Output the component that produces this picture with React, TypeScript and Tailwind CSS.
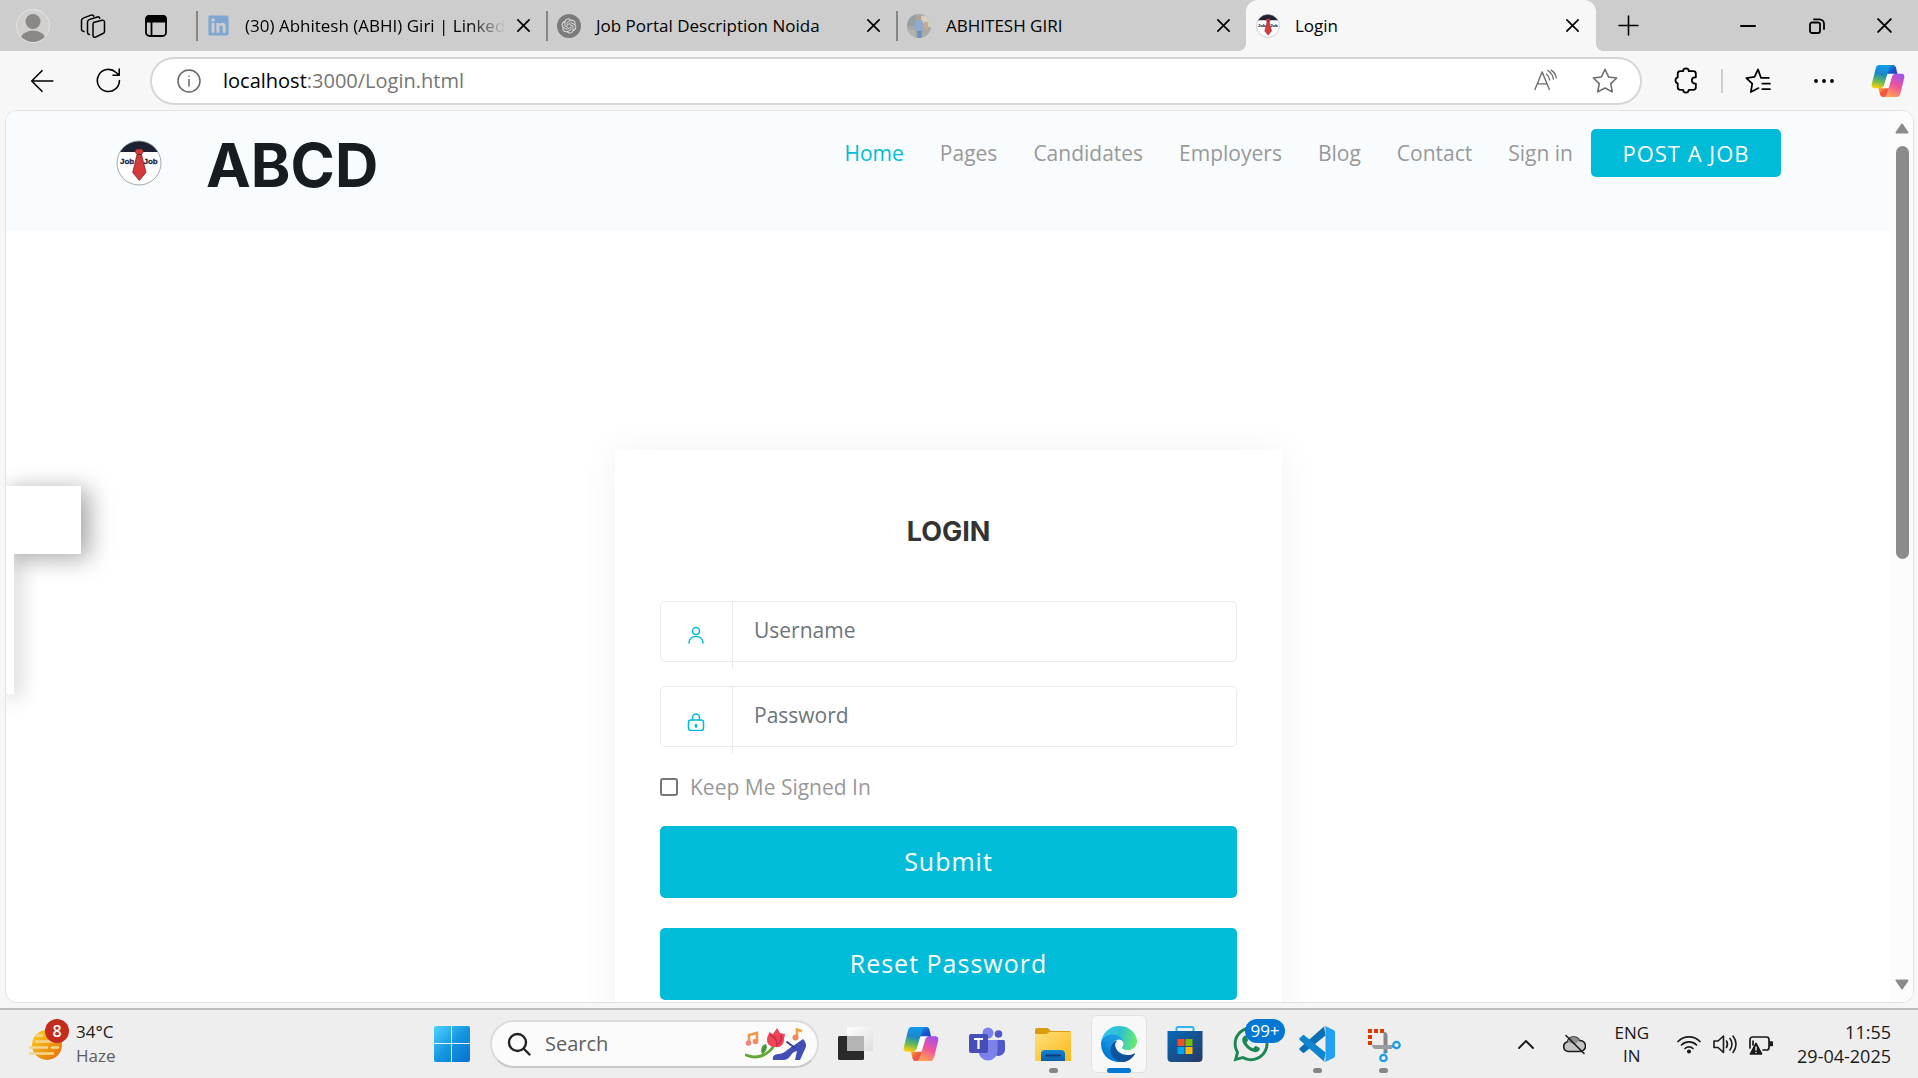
import type { ReactNode } from 'react';
import { FaLinkedin, FaWhatsapp } from 'react-icons/fa';
import { RiOpenaiFill } from 'react-icons/ri';

const UI_FONT = "font-['Open_Sans','Noto_Sans',sans-serif]";
const HEADING_FONT = "font-['Inter','Liberation_Sans',sans-serif]";

function JobLogo({ className }: { className: string }) {
  return (
    <svg viewBox="0 0 46 46" className={className} aria-hidden="true">
      <defs>
        <clipPath id="badge">
          <circle cx="23" cy="23" r="22" />
        </clipPath>
      </defs>
      <circle cx="23" cy="23" r="22" fill="#fff" />
      <rect width="46" height="12" fill="#1d2233" clipPath="url(#badge)" />
      <circle cx="23" cy="23" r="22" fill="none" stroke="#8d929c" strokeWidth="0.8" />
      <text x="4" y="24" fontSize="8" fontWeight="800" fill="#1d2540" stroke="#1d2540" strokeWidth="0.3" fontFamily="Liberation Sans, sans-serif">Job</text>
      <text x="27.500" y="24" fontSize="8" fontWeight="800" fill="#1d2540" stroke="#1d2540" strokeWidth="0.3" fontFamily="Liberation Sans, sans-serif">Job</text>
      <path d="M20.500 9h5.500l1.500 2.500-2 3h-4.500l-2-3z M21 14.500h4.500l4.500 18-6.700 8-6.600-8z" fill="#d63a3a" stroke="#5b1d28" strokeWidth="0.700" />
    </svg>
  );
}

function CopilotIcon({ className }: { className: string }) {
  return (
    <svg viewBox="0 0 36 36" className={className} aria-hidden="true">
      <defs>
        <linearGradient id="cpLeft" x1="0.600" y1="0" x2="0.400" y2="1">
          <stop offset="0" stopColor="#0d9df0" />
          <stop offset="0.400" stopColor="#1f86c9" />
          <stop offset="0.700" stopColor="#5fb95a" />
          <stop offset="1" stopColor="#f5cf10" />
        </linearGradient>
        <linearGradient id="cpTop" x1="0" y1="0" x2="1" y2="1">
          <stop offset="0" stopColor="#14a0ee" />
          <stop offset="0.600" stopColor="#1b53c8" />
          <stop offset="1" stopColor="#1842b8" />
        </linearGradient>
        <linearGradient id="cpRight" x1="0.700" y1="0" x2="0.300" y2="1">
          <stop offset="0" stopColor="#a552ec" />
          <stop offset="0.500" stopColor="#ee5599" />
          <stop offset="1" stopColor="#ffa552" />
        </linearGradient>
        <linearGradient id="cpBottom" x1="0" y1="0" x2="1" y2="1">
          <stop offset="0" stopColor="#ffb02e" />
          <stop offset="0.500" stopColor="#f0563a" />
          <stop offset="1" stopColor="#f2668c" />
        </linearGradient>
      </defs>
      <path d="M16 1h7.500c1.600 0 2.400 1 2.900 2.600L28.200 11H17z" fill="url(#cpTop)" />
      <path d="M20 35h-7.500c-1.600 0-2.400-1-2.900-2.600L7.800 25H19z" fill="url(#cpBottom)" />
      <path d="M8.500 1H22c-1.600.4-2.300 1.800-2.900 3.700l-5 17.300c-.7 2.500-2.300 3.700-4.800 3.700H4c-3 0-3.900-2.200-3-5.200L5 4.500C5.700 2.200 6.700 1 8.500 1z" fill="url(#cpLeft)" />
      <path d="M27.500 35H14c1.600-.4 2.300-1.800 2.900-3.700l5-17.300c.7-2.500 2.300-3.700 4.800-3.700H32c3 0 3.900 2.200 3 5.200l-4 16c-.7 2.300-1.700 3.500-3.500 3.500z" fill="url(#cpRight)" />
      <path d="M17.500 10.300H26c-2.200.3-3.500 1.500-4.100 3.700l-3.400 11.700H10c2.200-.3 3.500-1.500 4.100-3.700z" fill="#fafafa" />
    </svg>
  );
}

function EdgeIcon({ className }: { className: string }) {
  return (
    <svg viewBox="0 0 256 256" className={className} aria-hidden="true">
      <defs>
        <linearGradient id="edA" x1="63" y1="178" x2="241" y2="178" gradientUnits="userSpaceOnUse">
          <stop offset="0" stopColor="#0c59a4" />
          <stop offset="1" stopColor="#114a8b" />
        </linearGradient>
        <linearGradient id="edB" x1="140" y1="110" x2="45" y2="215" gradientUnits="userSpaceOnUse">
          <stop offset="0" stopColor="#1b9de2" />
          <stop offset="0.400" stopColor="#1595df" />
          <stop offset="1" stopColor="#0078d4" />
        </linearGradient>
        <linearGradient id="edC" x1="10" y1="70" x2="245" y2="120" gradientUnits="userSpaceOnUse">
          <stop offset="0" stopColor="#35c1f1" />
          <stop offset="0.500" stopColor="#2fc2cf" />
          <stop offset="1" stopColor="#66eb6e" />
        </linearGradient>
      </defs>
      <path fill="url(#edA)" d="M235.700 195.500a93.700 93.700 0 0 1-10.600 4.700 101.900 101.900 0 0 1-35.900 6.400c-47.300 0-88.500-32.500-88.500-74.300a31.500 31.500 0 0 1 16.400-27.300c-42.800 1.800-53.800 46.400-53.800 72.500 0 74 68.100 81.400 82.800 81.400 7.900 0 19.800-2.300 27-4.600l1.300-.4a128.300 128.300 0 0 0 66.600-52.800 4 4 0 0 0-5.300-5.600z" />
      <path fill="url(#edB)" d="M105.700 241.400a79.200 79.200 0 0 1-22.700-21.300 80.700 80.700 0 0 1 29.500-120c3.200-1.500 8.500-4.100 15.600-4a32.400 32.400 0 0 1 25.700 13 31.900 31.900 0 0 1 6.300 18.700c0-.2 24.500-79.600-80-79.600-43.900 0-80 41.700-80 78.200a130.200 130.200 0 0 0 12.100 56 128 128 0 0 0 156.400 67 75.500 75.500 0 0 1-62.800-8z" />
      <path fill="url(#edC)" d="M152.300 148.900c-.9 1-3.400 2.500-3.400 5.600 0 2.600 1.700 5.200 4.800 7.300 14.300 10 41.400 8.600 41.500 8.600a59.600 59.600 0 0 0 30.300-8.300 61.400 61.400 0 0 0 30.400-52.900c.3-22.400-8-37.300-11.300-43.900C223.500 23.900 177.700 0 128 0A128 128 0 0 0 0 126.200c.5-36.500 36.800-66 80-66 3.500 0 23.500.3 42 10a72.600 72.600 0 0 1 30.900 29.300c6.100 10.600 7.200 24.100 7.200 29.500s-2.700 13.300-7.800 19.900z" />
    </svg>
  );
}

function Stroke({ className, children, width = 1.5, box = 24 }: { className: string; children: ReactNode; width?: number; box?: number }) {
  return (
    <svg
      viewBox={`0 0 ${box} ${box}`}
      className={className}
      fill="none"
      stroke="currentColor"
      strokeWidth={width}
      strokeLinecap="round"
      strokeLinejoin="round"
      aria-hidden="true"
    >
      {children}
    </svg>
  );
}

function CloseGlyph({ className }: { className: string }) {
  return (
    <Stroke className={className} width={1.8} box={16}>
      <path d="M2 2l12 12M14 2L2 14" />
    </Stroke>
  );
}

function InactiveTab({ title, icon, faded = false }: { title: string; icon: ReactNode; faded?: boolean }) {
  return (
    <div className="flex min-w-0 max-w-[350px] flex-1 items-center">
      <span className="h-[30px] w-0.5 shrink-0 bg-[#868686]" />
      <button type="button" role="tab" aria-selected="false" className="ml-[9px] flex min-w-0 flex-1 items-center gap-[15px] text-left">
        {icon}
        <span className={`whitespace-nowrap ${faded ? '[mask-image:linear-gradient(to_right,black_calc(100%-36px),transparent)]' : ''}`}>{title}</span>
      </button>
      <button type="button" aria-label={`Close ${title}`} className="flex w-[45px] shrink-0 justify-center">
        <CloseGlyph className="size-[15px]" />
      </button>
    </div>
  );
}

function TabStrip() {
  return (
    <div className="flex h-[51px] shrink-0 items-stretch bg-[#cdcdcd] text-[17px] text-black">
      <div className="flex w-[196px] shrink-0 items-center">
        <button type="button" aria-label="Profile" className="ml-4">
          <svg viewBox="0 0 34 34" className="size-[34px]" aria-hidden="true">
            <defs>
              <clipPath id="avatar"><circle cx="17" cy="17" r="16" /></clipPath>
            </defs>
            <circle cx="17" cy="17" r="16.500" fill="#d2d0ce" stroke="#e6e4e2" />
            <g clipPath="url(#avatar)" fill="#8a8886">
              <circle cx="17" cy="12.500" r="7.500" />
              <ellipse cx="17" cy="31" rx="12.500" ry="9.500" />
            </g>
          </svg>
        </button>
        <button type="button" aria-label="Workspaces" className="ml-[30px]">
          <Stroke className="size-[26px]" width={1.5} box={26}>
            <path d="M13.500 9.500l8.500-2.300c1.200-.3 2.500.5 2.500 1.800v9.500c0 1-.6 1.700-1.500 2l-7.500 3.600c-1.200.5-2.500-.2-2.500-1.500V11.500c0-1 .2-1.700.5-2z" />
            <path d="M9.500 21.500c-1.500-.2-2-1-2-2V9c0-1.200.6-2 1.700-2.400l8-2.600c1.200-.3 2.300.3 2.600 1.300" />
            <path d="M4 18.500c-1.500-.3-2.500-1-2.500-2.300V7.500c0-1.200.6-2 1.700-2.400l7.800-3c1.200-.4 2.400 0 2.800 1" />
          </Stroke>
        </button>
        <button type="button" aria-label="Tab actions" className="ml-[38px]">
          <Stroke className="size-6" width={1.8}>
            <rect x="2" y="2" width="20" height="20" rx="3.500" />
            <path d="M2 7.500V5a3 3 0 0 1 3-3h14a3 3 0 0 1 3 3v2.500z" fill="currentColor" />
            <path d="M7.500 7v15" />
          </Stroke>
        </button>
      </div>
      <div role="tablist" aria-label="Open tabs" className="flex min-w-0 max-w-[1400px] flex-1">
        <InactiveTab faded title="(30) Abhitesh (ABHI) Giri | Linked" icon={<FaLinkedin className="size-[23px] shrink-0 text-[#7da7d2]" />} />
        <InactiveTab
          title="Job Portal Description Noida"
          icon={
            <span className="flex size-6 shrink-0 items-center justify-center rounded-full bg-[#7b7b7b] text-[#dedede]">
              <RiOpenaiFill className="size-[18px]" />
            </span>
          }
        />
        <InactiveTab
          title="ABHITESH GIRI"
          icon={
            <svg viewBox="0 0 24 24" className="size-6 shrink-0" aria-hidden="true">
              <defs><clipPath id="photo"><circle cx="12" cy="12" r="12" /></clipPath></defs>
              <g clipPath="url(#photo)">
                <rect width="24" height="24" fill="#a9a9a6" />
                <path d="M0 0h9v12H0z" fill="#95a0a6" />
                <path d="M14 2h10v11H14z" fill="#d6cfc0" />
                <path d="M17 8h4v8h-4z" fill="#c9a98c" />
                <path d="M9 6h6l2 5-1 6H9l-2-5z" fill="#8fa9cf" />
                <circle cx="12" cy="4.500" r="2.200" fill="#b99c8c" />
                <path d="M10 17h5l-.500 7h-4z" fill="#6f8fc0" />
                <path d="M0 16h8v8H0z" fill="#b5b5b0" />
              </g>
            </svg>
          }
        />
        <div className="relative flex min-w-0 max-w-[351px] flex-1 items-center rounded-t-xl bg-[#f7f7f7] before:absolute before:bottom-0 before:-left-2 before:size-2 before:bg-[radial-gradient(circle_at_0_0,transparent_8px,#f7f7f7_8px)] after:absolute after:-right-2 after:bottom-0 after:size-2 after:bg-[radial-gradient(circle_at_100%_0,transparent_8px,#f7f7f7_8px)]">
          <button type="button" role="tab" aria-selected="true" className="ml-2.5 flex flex-1 items-center gap-[15px] text-left">
            <JobLogo className="size-6" />
            <span>Login</span>
          </button>
          <button type="button" aria-label="Close Login" className="flex w-12 justify-center">
            <CloseGlyph className="size-[15px]" />
          </button>
        </div>
      </div>
      <button type="button" aria-label="New tab" className="ml-5 flex w-6 items-center justify-center">
        <Stroke className="size-[21px]" width={1.5} box={20}><path d="M10 1v18M1 10h18" /></Stroke>
      </button>
      <div className="ml-auto flex">
        <button type="button" aria-label="Minimize" className="flex w-[69px] items-center justify-center">
          <Stroke className="size-4" width={2} box={16}><path d="M1 8h14" /></Stroke>
        </button>
        <button type="button" aria-label="Restore" className="flex w-[69px] items-center justify-center">
          <Stroke className="size-4" width={1.8} box={16}>
            <rect x="1" y="4.500" width="10" height="10.500" rx="2" />
            <path d="M5 1.300h5.500a4.500 4.500 0 0 1 4.500 4.500V11" />
          </Stroke>
        </button>
        <button type="button" aria-label="Close window" className="flex w-[67px] items-center justify-center">
          <CloseGlyph className="size-[17px]" />
        </button>
      </div>
    </div>
  );
}

function ToolButton({ label, className, children }: { label: string; className: string; children: ReactNode }) {
  return (
    <button type="button" aria-label={label} className={`flex shrink-0 items-center justify-center text-black ${className}`}>
      {children}
    </button>
  );
}

function Toolbar() {
  return (
    <div className="flex h-[59px] shrink-0 items-center pl-[9px]">
      <ToolButton label="Back" className="w-[66px]">
        <Stroke className="size-[26px]" width={1.5}><path d="M22 12H2.500M12 2.500L2.500 12 12 21.500" /></Stroke>
      </ToolButton>
      <ToolButton label="Refresh" className="w-[66px]">
        <Stroke className="size-[25px]" width={1.5}>
          <path d="M22.500 12A10.600 10.600 0 1 1 19 4.100l3 2.600M22.300 1v6h-6" />
        </Stroke>
      </ToolButton>
      <div className="ml-[9px] flex h-12 min-w-0 flex-1 items-center rounded-full border-2 border-[#d6d6d6] bg-white">
        <ToolButton label="View site information" className="ml-[25px] w-6">
          <Stroke className="size-6 text-[#666]" width={1.5}>
            <circle cx="12" cy="12" r="11" />
            <path d="M12 10.500V17M12 7v.3" />
          </Stroke>
        </ToolButton>
        <div className="ml-[22px] flex-1 pt-px text-[20px] leading-7 text-[#767676]">
          <span className="text-black">localhost</span>:3000/Login.html
        </div>
        <ToolButton label="Read aloud" className="w-[60px]">
          <Stroke className="size-[23px] text-[#6b6b6b]" width={1.4}>
            <path d="M1 21.500L8.500 3l7.500 18.500M3.500 15.500h10M13 5.500c2 1.300 3 3.300 3.300 5.800M14.500 1.500c3.300 2.200 5.300 5 5.700 9M18 1.200c3 2 4.800 5 5.200 8" />
          </Stroke>
        </ToolButton>
        <ToolButton label="Add this page to favorites" className="mr-[5px] w-[60px]">
          <Stroke className="size-[26px] text-[#6b6b6b]" width={1.4}>
            <path d="M12 1.200l3.300 7 7.500 1-5.500 5.200 1.400 7.700L12 18.500l-6.700 3.600 1.400-7.700L1.200 9.200l7.500-1z" />
          </Stroke>
        </ToolButton>
      </div>
      <ToolButton label="Extensions" className="ml-[11px] w-[66px]">
        <Stroke className="size-[27px]" width={1.6}>
          <path d="M9 3.700a2.400 2.400 0 0 1 5 0h4a2.300 2.300 0 0 1 2.300 2.300v3.200h-.8a2.700 2.700 0 0 0 0 5.500h.8V18a2.300 2.300 0 0 1-2.300 2.300h-4a2.400 2.400 0 0 1-5 0H6.500A2.300 2.300 0 0 1 4.200 18v-3.500a2.700 2.700 0 0 1 0-5.200V6a2.300 2.300 0 0 1 2.300-2.300z" />
        </Stroke>
      </ToolButton>
      <span className="mx-0.5 h-6 w-0.5 bg-[#d0d0d0]" />
      <ToolButton label="Favorites" className="w-[66px]">
        <Stroke className="size-[26px]" width={1.6}>
          <path d="M22 9.200H14.800L12 1.300 8.800 8.200 1.200 9.300l5.500 5.200-1.300 7.700L12.500 18.500M16 14.500h7M16 19.500h7" />
        </Stroke>
      </ToolButton>
      <ToolButton label="Settings and more" className="w-[66px]">
        <svg viewBox="0 0 22 6" className="h-1.5 w-[22px]" aria-hidden="true">
          <circle cx="3" cy="3" r="1.900" /><circle cx="11" cy="3" r="1.900" /><circle cx="19" cy="3" r="1.900" />
        </svg>
      </ToolButton>
      <ToolButton label="Copilot" className="w-[61px]"><CopilotIcon className="size-[34px]" /></ToolButton>
    </div>
  );
}

const NAV = ['Home', 'Pages', 'Candidates', 'Employers', 'Blog', 'Contact', 'Sign in'];

function SiteHeader() {
  return (
    <header className="flex h-[120px] items-start justify-between bg-[#f8fcff] px-[110px] pt-[18px]">
      <a href="#home" className="flex items-start gap-11">
        <JobLogo className="mt-[11px] size-[46px]" />
        <span className={`text-[60px] leading-[72px] font-bold text-[#171c20] ${HEADING_FONT}`}>ABCD</span>
      </a>
      <nav className="flex items-center text-[21px] leading-[30px]">
        {NAV.map((item, i) => (
          <a key={item} href={`#${item.toLowerCase().replace(' ', '-')}`} className={`px-[18px] ${i === 0 ? 'text-[#00bcd9]' : 'text-[#999]'}`}>
            {item}
          </a>
        ))}
        <a href="#post" className="flex h-12 w-[190px] items-center justify-center rounded-[5px] bg-[#00bcd9] text-[22px] tracking-[1px] text-white">POST A JOB</a>
      </nav>
    </header>
  );
}

function Field({ id, label, type, icon }: { id: string; label: string; type: string; icon: ReactNode }) {
  return (
    <div className="relative mb-6">
      <input
        id={id}
        type={type}
        aria-label={label}
        placeholder={label}
        className="block h-[61px] w-full rounded-[5px] border border-[#ebebeb] bg-white pr-4 pb-[3px] pl-[93px] text-[21px] text-[#495057] placeholder:text-[#6c757d] placeholder:opacity-100"
      />
      <label htmlFor={id} className="absolute top-0 left-0 flex h-[68px] w-[73px] items-center justify-center border-r border-[#ebebeb] text-[#00bcd9]">
        {icon}
      </label>
    </div>
  );
}

function LoginCard() {
  return (
    <main className="mx-auto mt-[219px] max-w-[667px] bg-white px-[45px] pt-[62px] pb-12 shadow-[0_0_35px_rgba(0,0,0,0.06)]">
      <h1 className={`text-center text-[27px] leading-10 font-bold text-[#333] ${HEADING_FONT}`}>LOGIN</h1>
      <form className="mt-[49px]" onSubmit={(e) => e.preventDefault()}>
        <Field
          id="username"
          label="Username"
          type="text"
          icon={
            <Stroke className="size-[18px]" width={1.5} box={18}>
              <circle cx="9" cy="5" r="3.500" />
              <path d="M2 17c0-4 3-6.500 7-6.500s7 2.500 7 6.500" />
            </Stroke>
          }
        />
        <Field
          id="password"
          label="Password"
          type="password"
          icon={
            <Stroke className="mt-[3px] size-[18px]" width={1.5} box={18}>
              <path d="M5.500 7V4.500a3.500 3.500 0 0 1 7 0V7" />
              <rect x="1.500" y="7" width="15" height="10.500" rx="2.500" />
              <path d="M9 12v1.500" strokeWidth="2.500" />
            </Stroke>
          }
        />
        <div className="mt-[25px] flex h-[30px] items-center gap-3 text-[21px] leading-7 text-[#999]">
          <input
            id="keep"
            type="checkbox"
            className="size-[18px] appearance-none rounded-[3px] border-2 border-[#767676] bg-white checked:bg-[#00bcd9]"
          />
          <label htmlFor="keep" className="pb-px">Keep Me Signed In</label>
        </div>
        <button type="submit" className="mt-6 block h-[72px] w-full rounded-[5px] bg-[#00bcd9] text-[25px] tracking-[1px] text-white">Submit</button>
        <button type="button" className="mt-[30px] block h-[72px] w-full rounded-[5px] bg-[#00bcd9] text-[25px] tracking-[1px] text-white">Reset Password</button>
      </form>
    </main>
  );
}

function PageView() {
  return (
    <div className="relative mr-1 mb-[5px] ml-[5px] flex min-h-0 flex-1 overflow-hidden rounded-xl border border-[#e2e2e2] bg-white">
      <div className="min-w-0 flex-1 overflow-hidden">
        <SiteHeader />
        <LoginCard />
      </div>
      <div className="absolute top-[375px] left-0 h-[208px] w-2 bg-white shadow-[4px_4px_20px_rgba(0,0,0,0.3)]" />
      <div className="absolute top-[375px] left-0 h-[68px] w-[75px] bg-white shadow-[8px_4px_24px_rgba(0,0,0,0.36)]" />
      <div className="absolute top-[375px] left-0 h-[208px] w-2 bg-white" />
      <div className="flex w-[22px] shrink-0 flex-col items-center bg-[#fcfcfc] pt-3 pb-3">
        <svg viewBox="0 0 14 11" className="h-[11px] w-3.5" aria-hidden="true">
          <path d="M7 1.500L12.500 9.500h-11z" fill="#8b8b8b" stroke="#8b8b8b" strokeWidth="2" strokeLinejoin="round" />
        </svg>
        <div className="mt-3 h-[413px] w-[13px] rounded-full bg-[#8b8b8b]" />
        <svg viewBox="0 0 14 11" className="mt-auto h-[11px] w-3.5" aria-hidden="true">
          <path d="M7 9.500L12.500 1.500h-11z" fill="#8b8b8b" stroke="#8b8b8b" strokeWidth="2" strokeLinejoin="round" />
        </svg>
      </div>
    </div>
  );
}

function TaskItem({ label, state, children }: { label: string; state?: 'open' | 'active'; children: ReactNode }) {
  return (
    <button
      type="button"
      aria-label={label}
      className={`relative mx-[5px] flex h-[58px] w-14 shrink-0 items-center justify-center rounded-md ${state === 'active' ? 'border border-[#e2e2e2] bg-[#f8f8f8]' : ''}`}
    >
      {children}
      {state === 'active' && <span className="absolute -bottom-px h-[5px] w-6 rounded-full bg-[#0078d4]" />}
      {state === 'open' && <span className="absolute bottom-0 h-[5px] w-[9px] rounded-full bg-[#868686]" />}
    </button>
  );
}

function FolderIcon() {
  return (
    <svg viewBox="0 0 36 36" className="size-9" aria-hidden="true">
      <defs>
        <linearGradient id="folder" x1="0" y1="0" x2="1" y2="1"><stop offset="0" stopColor="#ffe07a" /><stop offset="1" stopColor="#fbb91a" /></linearGradient>
        <linearGradient id="folderTab" x1="0" y1="0" x2="0" y2="1"><stop offset="0" stopColor="#1583d4" /><stop offset="1" stopColor="#0a5fa8" /></linearGradient>
      </defs>
      <path d="M0 4a2 2 0 0 1 2-2h9.500c1 0 1.500.4 2.300 1l2.200 2h18a2 2 0 0 1 2 2v6H0z" fill="#dc9c0c" />
      <path d="M0 8h11.500l3-2H36v29H0z" fill="url(#folder)" />
      <path d="M6 35v-7a4 4 0 0 1 4-4h16a4 4 0 0 1 4 4v7z" fill="url(#folderTab)" />
      <path d="M11 29.500h14" stroke="#073f78" strokeWidth="2" strokeLinecap="round" />
    </svg>
  );
}

function SearchArt() {
  return (
    <svg viewBox="0 0 62 34" className="h-[34px] w-[62px] shrink-0" aria-hidden="true">
      <path d="M4 16V8l8-2v8" fill="none" stroke="#f09a4a" strokeWidth="2.600" />
      <circle cx="3.500" cy="16" r="2.800" fill="#ee8673" />
      <circle cx="10.500" cy="14.500" r="2.800" fill="#f08c68" />
      <path d="M1 28c8 4 20 2 27-8" fill="none" stroke="#62a838" strokeWidth="3" strokeLinecap="round" />
      <path d="M17 27c-2-5 0-9 4-10 2 4 0 8-4 10z" fill="#47983a" />
      <path d="M22 13c0-4 2-5 2-8l4 2 4-6 3 5 5 1-1 5c0 6-4 9-9 8-5 0-8-3-8-7z" fill="#ee4658" />
      <path d="M25 8c4 1 7 4 7 10 3-2 5-6 4-10" fill="none" stroke="#c82742" strokeWidth="1.500" />
      <path d="M52 11V2.500l5 1.800" fill="none" stroke="#f2a23c" strokeWidth="2.600" />
      <circle cx="50.500" cy="10.500" r="3" fill="#ef8a62" />
      <path d="M28 33c-1-4 2-6 6-6 7-1 8-5 14-8l10-7c3 3 4 7 2 10l-5 11h-5l2-9c-7 1-6 9-14 9z" fill="#4250b5" />
      <path d="M42 15l8 6" stroke="#343d98" strokeWidth="2" strokeLinecap="round" />
    </svg>
  );
}

function Taskbar() {
  return (
    <footer className="flex h-[70px] shrink-0 items-center border-t-2 border-[#bcbcbc] bg-[#eee] text-[17px] leading-6 text-[#1a1a1a]">
      <div className="flex flex-1 items-center">
        <button type="button" className="ml-7 flex items-center gap-[5px] text-left">
          <svg viewBox="0 0 43 44" className="mb-2 h-11 w-[43px]" aria-hidden="true">
            <defs><linearGradient id="sun" x1="0" y1="0" x2="1" y2="1"><stop offset="0" stopColor="#ffd21e" /><stop offset="1" stopColor="#e46a0c" /></linearGradient></defs>
            <circle cx="19" cy="27" r="15" fill="url(#sun)" />
            <path d="M8 17.500h6M8 23.500h17M2 29.500h17M24 29.500h6M2 35.500h23" stroke="#f2d68c" strokeWidth="2.600" strokeLinecap="round" />
            <circle cx="29" cy="13" r="12" fill="#c42b1c" />
            <text x="29" y="19" fontSize="16" fontWeight="600" textAnchor="middle" fill="#fff" fontFamily="Open Sans, sans-serif">8</text>
          </svg>
          <span>34°C<br /><span className="text-[#5c5c5c]">Haze</span></span>
        </button>
      </div>
      <div className="mr-14 flex items-center">
        <TaskItem label="Start">
          <svg viewBox="0 0 36 36" className="size-9" aria-hidden="true">
            <defs><linearGradient id="win" x1="0" y1="0" x2="1" y2="1"><stop offset="0" stopColor="#4ed3ff" /><stop offset="0.500" stopColor="#1596e0" /><stop offset="1" stopColor="#0571cf" /></linearGradient></defs>
            <path d="M2 0h15v17H0V2a2 2 0 0 1 2-2zM18 0h16a2 2 0 0 1 2 2v15H18zM0 18h17v18H2a2 2 0 0 1-2-2zM18 18h18v16a2 2 0 0 1-2 2H18z" fill="url(#win)" />
          </svg>
        </TaskItem>
        <label className="mr-[3px] ml-[5px] flex h-12 w-[329px] items-center rounded-full border-2 border-[#dcdcdc] border-b-[#c8c8c8] bg-[#fbfbfb] pr-2.5 pl-[15px]">
          <Stroke className="size-6 shrink-0 text-[#222]" width={2.4}>
            <circle cx="10.500" cy="10.500" r="8.500" />
            <path d="M17 17l5.500 5.500" />
          </Stroke>
          <input type="search" placeholder="Search" aria-label="Search" className="ml-3.5 min-w-0 flex-1 bg-transparent text-[20px] placeholder:text-[#5f5f5f] placeholder:opacity-100" />
          <SearchArt />
        </label>
        <TaskItem label="Task view">
          <svg viewBox="0 0 36 36" className="size-9" aria-hidden="true">
            <defs><linearGradient id="tv" x1="0" y1="0" x2="1" y2="1"><stop offset="0" stopColor="#fff" /><stop offset="1" stopColor="#dedede" /></linearGradient></defs>
            <rect x="1" y="10" width="26" height="24" rx="1.500" fill="#2a2a2a" />
            <rect x="10" y="1" width="26" height="24" rx="1.500" fill="url(#tv)" />
            <path d="M10 10h17v15H10z" fill="#b4b4b4" />
          </svg>
        </TaskItem>
        <TaskItem label="Copilot"><CopilotIcon className="size-9" /></TaskItem>
        <TaskItem label="Microsoft Teams">
          <svg viewBox="0 0 36 36" className="size-9" aria-hidden="true">
            <circle cx="29.500" cy="8" r="3.800" fill="#5059c9" />
            <circle cx="19" cy="7" r="5.500" fill="#7b83eb" />
            <path d="M25 14h9.500c.8 0 1.500.7 1.500 1.500v8a6.500 6.500 0 0 1-11 4.500z" fill="#5059c9" />
            <path d="M10 14h17c1 0 1.500.7 1.500 1.500V25a9.500 9.500 0 0 1-19 0z" fill="#7b83eb" />
            <rect y="8" width="19" height="19" rx="2" fill="#464eb8" />
            <path d="M5 13h9M9.500 13v10" stroke="#fff" strokeWidth="2.200" />
          </svg>
        </TaskItem>
        <TaskItem label="File Explorer" state="open"><FolderIcon /></TaskItem>
        <TaskItem label="Microsoft Edge" state="active"><EdgeIcon className="size-9" /></TaskItem>
        <TaskItem label="Microsoft Store">
          <svg viewBox="0 0 36 36" className="size-9" aria-hidden="true">
            <defs><linearGradient id="store" x1="0" y1="0" x2="1" y2="1"><stop offset="0" stopColor="#0669ba" /><stop offset="1" stopColor="#263a63" /></linearGradient></defs>
            <path d="M9.500 6V2.500A1.500 1.500 0 0 1 11 1h14a1.500 1.500 0 0 1 1.500 1.500V6" fill="none" stroke="#2db5f3" strokeWidth="2" />
            <path d="M.5 5h35v27a4 4 0 0 1-4 4h-27a4 4 0 0 1-4-4z" fill="url(#store)" />
            <path d="M10.500 13h7v7h-7z" fill="#f25022" />
            <path d="M18.500 13h7v7h-7z" fill="#7fba00" />
            <path d="M10.500 21h7v7h-7z" fill="#00a4ef" />
            <path d="M18.500 21h7v7h-7z" fill="#ffb900" />
          </svg>
        </TaskItem>
        <TaskItem label="WhatsApp">
          <FaWhatsapp className="size-10 text-[#1b8755]" />
          <span className="absolute top-1 left-[22px] flex h-6 w-10 items-center justify-center rounded-full bg-[#0078d4] text-[17px] text-white">99+</span>
        </TaskItem>
        <TaskItem label="Visual Studio Code" state="open">
          <svg viewBox="0 0 36 36" className="size-9" aria-hidden="true">
            <path d="M26.500 9.500L5.500 26.500c-.7.600-1.400.600-2 0L1 24.300c-.9-.8-.9-1.700 0-2.500L25 .5z" fill="#0b6fb8" />
            <path d="M26.500 26.500L5.500 9.500c-.7-.6-1.400-.6-2 0L1 11.700c-.9.800-.9 1.700 0 2.500L25 35.500z" fill="#0f85d0" />
            <path d="M26 0l8.500 4c1 .5 1.500 1.200 1.500 2.200v23.600c0 1-.5 1.700-1.500 2.200L26 36c-.5.200-1.200 0-1.500-.5 1 .5 2 0 2-1.500V2c0-1.500-1-2-2-1.500.3-.5 1-.7 1.500-.5z" fill="#22a0f2" />
          </svg>
        </TaskItem>
        <TaskItem label="Snipping Tool" state="open">
          <svg viewBox="0 0 36 36" className="size-9" aria-hidden="true">
            <rect width="26" height="26" rx="2" fill="#f1efee" />
            <path d="M3 3h4v4H3zM9 3h4v4H9zM15 3h4v4h-4zM3 9h4v4H3zM3 15h4v4H3z" fill="#d83b01" />
            <path d="M19 6c2.500 0 3.500 1.500 3.500 4v17h-4V8z" fill="#85898d" />
            <path d="M7 19h20v4H11c-2.500 0-4-1.500-4-4z" fill="#9a9da1" />
            <circle cx="31.500" cy="19" r="3.200" fill="none" stroke="#1f9be0" strokeWidth="2.200" />
            <circle cx="18.500" cy="32" r="3.200" fill="none" stroke="#1f9be0" strokeWidth="2.200" />
            <path d="M20 27.500l.8-2.500M27 20.800l2-.8" stroke="#1f9be0" strokeWidth="2.400" />
          </svg>
        </TaskItem>
      </div>
      <div className="flex flex-1 items-center justify-end pr-[27px]">
        <button type="button" aria-label="Show hidden icons" className="mr-7">
          <Stroke className="size-4" width={1.9} box={16}><path d="M1 12l7-7 7 7" /></Stroke>
        </button>
        <button type="button" aria-label="OneDrive" className="mr-7">
          <Stroke className="size-6" width={1.6}>
            <path d="M6 19.500a5 5 0 0 1-.5-9.800A6.500 6.500 0 0 1 17.500 8.500a5.500 5.500 0 0 1 1 11z" fill="#c4c4c4" />
            <path d="M5.500 9.700A6.500 6.500 0 0 1 17.500 8.500l-5 4z" fill="#8e8e8e" stroke="none" />
            <path d="M4 3.500l18 18" />
          </Stroke>
        </button>
        <button type="button" className="mr-7 text-center leading-[23px]">ENG<br />IN</button>
        <button type="button" aria-label="Network, volume and battery" className="mr-6 flex gap-3">
          <Stroke className="size-6" width={1.7}>
            <path d="M1 9.500a15.500 15.500 0 0 1 22 0M4.500 13a10.700 10.700 0 0 1 15 0M8 16.500a5.700 5.700 0 0 1 8 0" />
            <circle cx="12" cy="19.500" r="1.200" fill="currentColor" />
          </Stroke>
          <Stroke className="size-6" width={1.6}>
            <path d="M1 9h4l5.500-5v16.500L5 15.500H1zM13.500 9c1.200 2 1.200 4.500 0 6.500M17 6.500c2.400 3.500 2.400 8 0 11.500M20 4c4 5 4 11.500 0 16.500" />
          </Stroke>
          <Stroke className="size-6" width={1.7}>
            <path d="M1 16V7.500A2.500 2.500 0 0 1 3.500 5h14A2.500 2.500 0 0 1 20 7.500v8a2.500 2.500 0 0 1-2.500 2.500H14" />
            <path d="M21 10h2.200v3.500H21z" fill="currentColor" />
            <path d="M4 9v4" />
            <path d="M7 11.500L12.500 22h-11z" fill="currentColor" />
            <path d="M7 15v3M7 20.500v.1" stroke="#eee" strokeWidth="1.500" />
          </Stroke>
        </button>
        <button type="button" className="text-right text-lg leading-6">11:55<br />29-04-2025</button>
      </div>
    </footer>
  );
}

export default function App() {
  return (
    <div className={`flex h-screen flex-col overflow-hidden bg-[#f7f7f7] ${UI_FONT}`}>
      <TabStrip />
      <Toolbar />
      <PageView />
      <Taskbar />
    </div>
  );
}
